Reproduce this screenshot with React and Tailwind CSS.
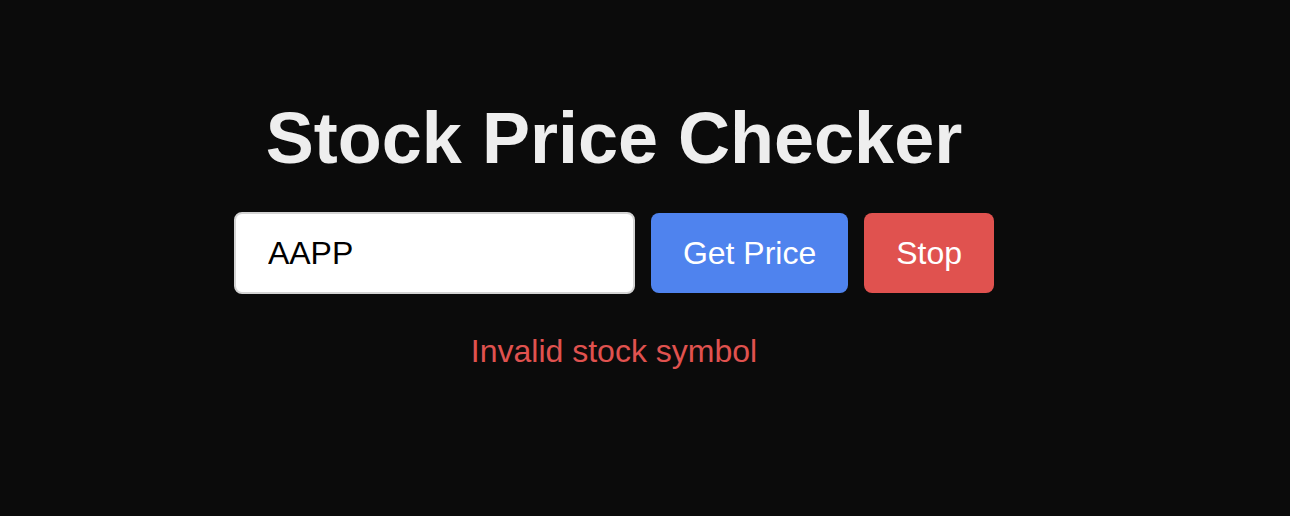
import { useState } from "react";

export default function App() {
  const [symbol, setSymbol] = useState("AAPP");

  return (
    <div className="min-h-screen bg-[#0b0b0b] font-['Liberation_Sans',Arial,sans-serif]">
      <div className="w-[1228px] flex flex-col items-center pt-[102px]">
        <h1 className="text-7xl leading-none font-bold text-[#eeeeee]">Stock Price Checker</h1>

        {/* search row */}
        <div className="mt-[38px] flex items-center gap-4">
          <input
            value={symbol}
            onChange={(e) => setSymbol(e.target.value)}
            className="w-[401px] h-[82px] pl-8 pr-4 text-[32px] text-black bg-white border-2 border-[#d4d4d4] rounded-lg outline-none"
          />
          <button className="h-[80px] px-8 text-[32px] text-white bg-[#4f83ee] rounded-lg">
            Get Price
          </button>
          <button className="h-[80px] px-8 text-[32px] text-white bg-[#e0524f] rounded-lg">
            Stop
          </button>
        </div>

        <p className="mt-[41px] text-[32px] leading-none text-[#e0524f]">Invalid stock symbol</p>
      </div>
    </div>
  );
}
